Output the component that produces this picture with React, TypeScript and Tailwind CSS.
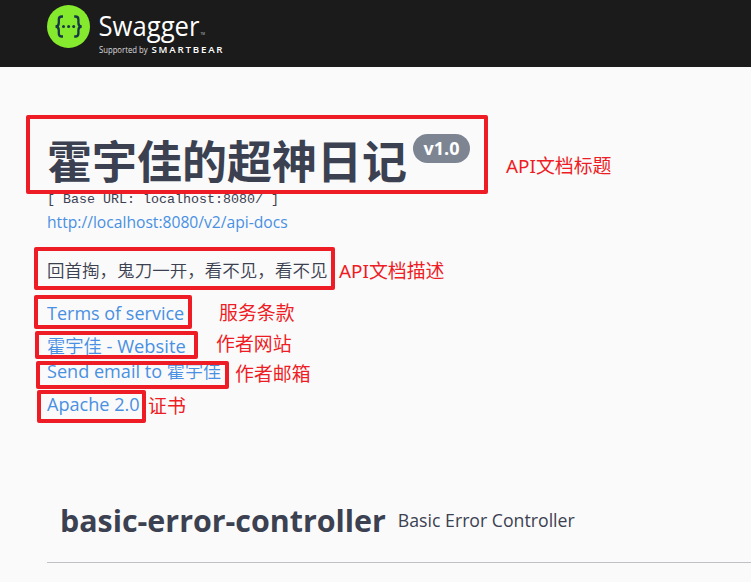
import React from "react";

const sans = "font-['Open_Sans','Noto_Sans_CJK_SC',sans-serif]";
const cjk = "font-['Noto_Sans','Noto_Sans_CJK_SC',sans-serif]";

function Logo() {
  return (
    <svg width="180" height="56" viewBox="0 0 180 56" className="block">
      <circle cx="21.5" cy="26.5" r="21.5" fill="#85ea2d" />
      <g fill="none" stroke="#173647" strokeWidth="2.3">
        <path d="M16 16.5h-1.2c-2 0-3 1-3 3v3.200c0 2.500-.9 3.800-3.300 3.800c2.400 0 3.300 1.300 3.300 3.800v3.200c0 2 1 3 3 3H16" />
        <path d="M27.200 16.500h1.200c2 0 3 1 3 3v3.200c0 2.500.9 3.800 3.300 3.800c-2.400 0-3.300 1.300-3.300 3.800v3.200c0 2-1 3-3 3h-1.200" />
      </g>
      <g fill="#173647">
        <circle cx="16.500" cy="26.500" r="1.500" />
        <circle cx="21.600" cy="26.500" r="1.500" />
        <circle cx="26.700" cy="26.500" r="1.500" />
      </g>
      <g fill="#fff" className="font-['Open_Sans',sans-serif]">
        <text x="51.500" y="35.500" fontSize="27" textLength="101" lengthAdjust="spacingAndGlyphs">Swagger</text>
        <text x="153.500" y="35" fontSize="3" fill="#ccc">TM</text>
        <text x="52" y="53" fontSize="8.200" fill="#ddd" textLength="48.500" lengthAdjust="spacingAndGlyphs">Supported by</text>
        <text x="104.500" y="53" fontSize="9.700" fontWeight="600" textLength="71">SMARTBEAR</text>
      </g>
    </svg>
  );
}

function Box({ className }: { className: string }) {
  return <div className={`absolute rounded-[2px] border-4 border-[#ee1c25] ${className}`} />;
}

function Note({ className = "", children }: { className?: string; children: React.ReactNode }) {
  return (
    <span className={`whitespace-nowrap text-[18.9px] leading-6 text-[#ee1c25] ${cjk} ${className}`}>
      {children}
    </span>
  );
}

export default function App() {
  return (
    <div className={`flex h-[582px] w-[751px] flex-col overflow-hidden bg-[#fafafa] text-[#3b4151] ${sans}`}>
      <header className="h-[67px] shrink-0 bg-[#1b1b1b] pl-[47px]">
        <Logo />
      </header>
      <main className="flex flex-col whitespace-nowrap pl-[47px] pt-12">
        <div className="relative flex h-[75px] items-start pt-[19px]">
          <h1 className="w-[360px] font-['Noto_Sans_CJK_SC',sans-serif] text-[45px] font-bold leading-[52px]">霍宇佳的超神日记</h1>
          <span className="ml-[6px] flex h-[29px] w-[57px] items-center justify-center rounded-full bg-[#7d8492] text-[18px] font-bold text-white">
            v1.0
          </span>
          <Note className="pl-9 pt-5">API文档标题</Note>
          <Box className="-left-[21px] top-0 h-[79px] w-[462px]" />
        </div>
        <pre className="h-5 font-['Liberation_Mono',monospace] text-[13.33px] leading-[20px]">[ Base URL: localhost:8080/ ]</pre>
        <a className="h-[26px] text-[15.65px] leading-[25px] text-[#4990e2]">http://localhost:8080/v2/api-docs</a>
        <div className="relative mt-[11px] flex h-[43px] items-center">
          <p className="w-[292px] pt-[3px] font-['Noto_Sans_CJK_SC_DemiLight','Noto_Sans_CJK_SC',sans-serif] text-[17.55px] font-[350] leading-[26px]">
            回首掏，鬼刀一开，看不见，看不见
          </p>
          <Note className="pt-[5px]">API文档描述</Note>
          <Box className="-left-[13px] top-0 h-[43px] w-[301px]" />
        </div>
        <div className="relative mt-[5px] flex h-[34px] items-center pt-[2px]">
          <a className="w-[172px] text-[18px] text-[#4990e2]">Terms of service</a>
          <Note>服务条款</Note>
          <Box className="-left-[13px] top-0 h-[34px] w-[158px]" />
        </div>
        <div className="relative mt-[2px] flex h-[28px] items-center">
          <a className="w-[169px] pt-[2px] text-[18.3px] font-[350] text-[#4990e2]">霍宇佳 <span className="font-normal">- Website</span></a>
          <Note className="pb-[2px]">作者网站</Note>
          <Box className="-left-[12px] top-0 h-[28px] w-[163px]" />
        </div>
        <div className="relative mt-[2px] flex h-[28px] items-center">
          <a className="w-[188px] pb-[6px] text-[18.1px] font-[350] text-[#4990e2]"><span className="font-normal">Send email to</span> 霍宇佳</a>
          <Note className="pb-[2px]">作者邮箱</Note>
          <Box className="-left-[11px] top-0 h-[28px] w-[193px]" />
        </div>
        <div className="relative mt-px flex h-[33px] items-center">
          <a className="w-[101px] pb-[4px] text-[18.1px] text-[#4990e2]">Apache 2.0</a>
          <Note className="pb-[2px]">证书</Note>
          <Box className="-left-[10px] top-0 h-[33px] w-[109px]" />
        </div>
        <section className="mt-[68px] flex h-[72px] items-center gap-[12px] border-b border-[#c0c1c5] pb-3 pl-[13px]">
          <h2 className="text-[30.4px] font-bold">basic-error-controller</h2>
          <small className="text-[17.7px]">Basic Error Controller</small>
        </section>
      </main>
    </div>
  );
}
